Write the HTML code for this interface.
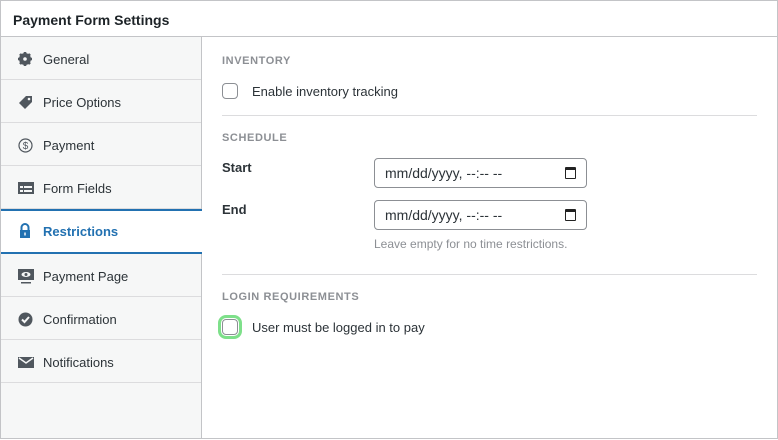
<!DOCTYPE html>
<html><head><style>
*{box-sizing:border-box;margin:0;padding:0}
body{width:778px;height:440px;background:#fff;font-family:"Liberation Sans","DejaVu Sans",sans-serif;color:#1d2327;position:relative;overflow:hidden}
.box{position:absolute;left:0;top:0;width:778px;height:439px;border:1px solid #c3c4c7}
.hd{position:absolute;left:1px;top:1px;width:776px;height:36px;border-bottom:1px solid #c3c4c7;font-weight:bold;font-size:14px;padding:11px 12px}
.side{position:absolute;left:1px;top:37px;width:201px;height:401px;background:#f6f7f7;border-right:1px solid #c3c4c7}
.it{position:absolute;left:0;width:200px;height:43px;border-bottom:1px solid #dcdcde;font-size:13px;color:#2c3338;padding-left:42px;line-height:45px}
.it svg{position:absolute;left:17px;top:15px}
.act{background:#fff;color:#2271b1;font-weight:bold;border-top:2px solid #2271b1;border-bottom:2px solid #2271b1;width:201px}
.t{position:absolute;font-size:11px;font-weight:bold;color:#8c8f94;letter-spacing:.6px}
.l{position:absolute;font-size:13px;color:#2c3338}
.cb{position:absolute;width:16px;height:16px;border:1px solid #8c8f94;border-radius:4px;background:#fff}
.hr{position:absolute;left:222px;width:535px;height:1px;background:#dcdcde}
.in{position:absolute;left:374px;width:213px;height:30px;border:1px solid #8c8f94;border-radius:4px;font-size:14px;padding:6px 10px;color:#2c3338}
.in i{position:absolute;right:10px;top:8px;width:11px;height:12px;border:1.5px solid #222;border-top-width:3px;border-radius:1px}
</style></head><body>
<div class="box"></div>
<div class="hd">Payment Form Settings</div>
<div class="side">
<div class="it" style="top:0"><svg width="14" height="14" viewBox="0 0 14 14"><circle cx="7" cy="7" r="4.5" fill="none" stroke="#50575e" stroke-width="3"/><g stroke="#50575e" stroke-width="2.6"><line x1="7" y1="0" x2="7" y2="14"/><line x1="0" y1="7" x2="14" y2="7"/><line x1="2" y1="2" x2="12" y2="12"/><line x1="12" y1="2" x2="2" y2="12"/></g><circle cx="7" cy="7" r="1.8" fill="#f6f7f7"/></svg>General</div>
<div class="it" style="top:43px"><svg width="15" height="15" viewBox="0 0 15 15"><path d="M8 1h6v6l-7 7-6-6z" fill="#50575e"/><circle cx="11" cy="4" r="1.3" fill="#f6f7f7"/></svg>Price Options</div>
<div class="it" style="top:86px"><svg width="15" height="15" viewBox="0 0 15 15"><circle cx="7.5" cy="7.5" r="6.5" fill="none" stroke="#50575e" stroke-width="1.2"/><text x="7.5" y="11" font-size="10" text-anchor="middle" fill="#50575e" font-family="Liberation Sans">$</text></svg>Payment</div>
<div class="it" style="top:129px"><svg width="16" height="14" viewBox="0 0 16 14"><rect x="0" y="1" width="16" height="12" fill="#50575e"/><rect x="2" y="5" width="3" height="2" fill="#f6f7f7"/><rect x="6" y="5" width="8" height="2" fill="#f6f7f7"/><rect x="2" y="9" width="3" height="2" fill="#f6f7f7"/><rect x="6" y="9" width="8" height="2" fill="#f6f7f7"/></svg>Form Fields</div>
<div class="it act" style="top:172px;height:45px;line-height:42px"><svg width="14" height="15" viewBox="0 0 14 15" style="top:12px"><path d="M3.5 7V4.5a3.5 3.5 0 0 1 7 0V7" fill="none" stroke="#2271b1" stroke-width="2"/><rect x="2" y="7" width="10" height="8" fill="#2271b1"/><rect x="6.3" y="9.5" width="1.4" height="3" fill="#fff"/></svg>Restrictions</div>
<div class="it" style="top:217px;height:43px"><svg width="16" height="15" viewBox="0 0 16 15"><rect x="0" y="0" width="16" height="11" fill="#50575e"/><ellipse cx="8" cy="5.5" rx="4.5" ry="2.5" fill="#f6f7f7"/><circle cx="8" cy="5.5" r="1.5" fill="#50575e"/><rect x="3" y="13" width="10" height="1.5" fill="#50575e"/></svg>Payment Page</div>
<div class="it" style="top:260px"><svg width="15" height="15" viewBox="0 0 15 15"><circle cx="7.5" cy="7.5" r="7" fill="#50575e"/><path d="M4 7.5l2.5 2.5 4.5-5" fill="none" stroke="#f6f7f7" stroke-width="2"/></svg>Confirmation</div>
<div class="it" style="top:303px"><svg width="16" height="13" viewBox="0 0 16 13" style="top:16px"><rect x="0" y="1" width="16" height="11" fill="#50575e"/><path d="M1 2l7 5 7-5" fill="none" stroke="#f6f7f7" stroke-width="1.5"/></svg>Notifications</div>
</div>
<div class="t" style="left:222px;top:55px">INVENTORY</div>
<div class="cb" style="left:222px;top:83px"></div>
<div class="l" style="left:252px;top:84px">Enable inventory tracking</div>
<div class="hr" style="top:115px"></div>
<div class="t" style="left:222px;top:132px">SCHEDULE</div>
<div class="l" style="left:222px;top:160px;font-weight:bold">Start</div>
<div class="in" style="top:158px">mm/dd/yyyy, --:-- --<i></i></div>
<div class="l" style="left:222px;top:202px;font-weight:bold">End</div>
<div class="in" style="top:200px">mm/dd/yyyy, --:-- --<i></i></div>
<div class="l" style="left:374px;top:237px;font-size:12px;color:#8c8f94">Leave empty for no time restrictions.</div>
<div class="hr" style="top:274px"></div>
<div class="t" style="left:222px;top:291px">LOGIN REQUIREMENTS</div>
<div class="cb" style="left:222px;top:319px;box-shadow:0 0 0 1px #fff,0 0 0 4px #7ee08a"></div>
<div class="l" style="left:252px;top:320px">User must be logged in to pay</div>
</body></html>
